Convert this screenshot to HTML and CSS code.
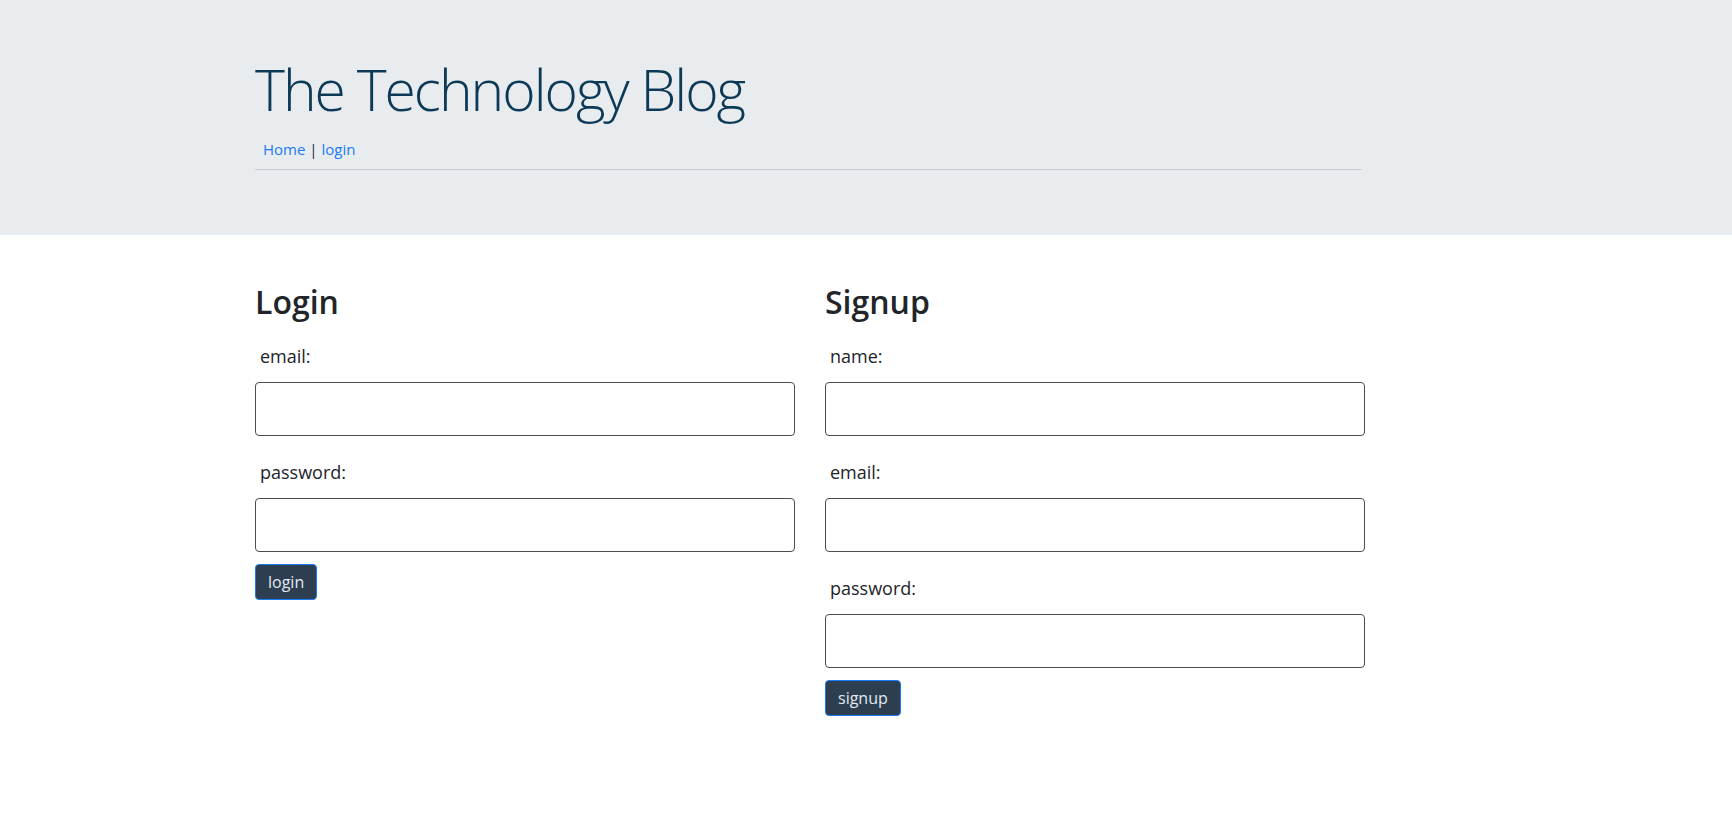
FILE: index.html
```html
<!DOCTYPE html>
<html lang="en">
<head>
<meta charset="utf-8">
<title>The Technology Blog</title>
<link rel="stylesheet" href="styles.css">
</head>
<body>
<header class="masthead">
  <div class="container">
    <h1 class="site-title">The Technology Blog</h1>
    <nav class="site-nav"><a href="#">Home</a> | <a href="#">login</a></nav>
    <hr class="rule">
  </div>
</header>
<main class="container forms">
  <section class="form-col">
    <h2 class="form-title">Login</h2>
    <label class="field-label">email:</label>
    <input class="field-input" type="text">
    <label class="field-label">password:</label>
    <input class="field-input" type="password">
    <button class="btn">login</button>
  </section>
  <section class="form-col">
    <h2 class="form-title">Signup</h2>
    <label class="field-label">name:</label>
    <input class="field-input" type="text">
    <label class="field-label">email:</label>
    <input class="field-input" type="text">
    <label class="field-label">password:</label>
    <input class="field-input" type="password">
    <button class="btn">signup</button>
  </section>
</main>
</body>
</html>
```
FILE: styles.css
```css
* { box-sizing: border-box; }
html, body { margin: 0; padding: 0; background: #fff; }
body {
  font-family: "Open Sans", "Noto Sans", sans-serif;
  color: #212529;
  font-size: 16px;
}
.container {
  width: 1110px;
  margin-left: 255px;
}
.masthead {
  background: #e9ecef;
  padding-top: 54px;
  padding-bottom: 65px;
}
.site-title {
  margin: 0;
  font-size: 57px;
  line-height: 70px;
  font-weight: 300;
  color: #0c3a56;
  letter-spacing: -2px;
}
.site-nav {
  margin-top: 13px;
  padding-left: 8px;
  font-size: 15px;
  line-height: 24px;
  color: #1b2a3a;
}
.site-nav a { color: #1a7cf5; text-decoration: none; }
.rule {
  margin: 8px 0 0 0;
  border: 0;
  border-top: 1px solid #c9cdd1;
  width: 1107px;
  height: 0;
}
.forms {
  display: grid;
  grid-template-columns: 540px 540px;
  column-gap: 30px;
  align-items: start;
  padding-top: 48px;
}
.form-col { display: flex; flex-direction: column; align-items: flex-start; }
.form-title {
  margin: 0 0 22px 0;
  font-size: 32px;
  line-height: 1.2;
  font-weight: 600;
  color: #212529;
}
.field-label {
  display: block;
  font-size: 18px;
  line-height: 27px;
  padding-left: 5px;
  margin-bottom: 12px;
  color: #212529;
}
.field-input {
  display: block;
  width: 540px;
  height: 54px;
  border: 1px solid #4d4d4d;
  border-radius: 4px;
  background: #fff;
  margin: 0 0 23px 0;
  font: inherit;
}
.field-input:last-of-type { margin-bottom: 12px; }
.btn {
  height: 36px;
  padding: 0 12px;
  background: #2c3e50;
  color: #e3e9f0;
  border: 1px solid #1a7cf5;
  border-radius: 4px;
  font-family: inherit;
  font-size: 16px;
  line-height: 1;
}
```
